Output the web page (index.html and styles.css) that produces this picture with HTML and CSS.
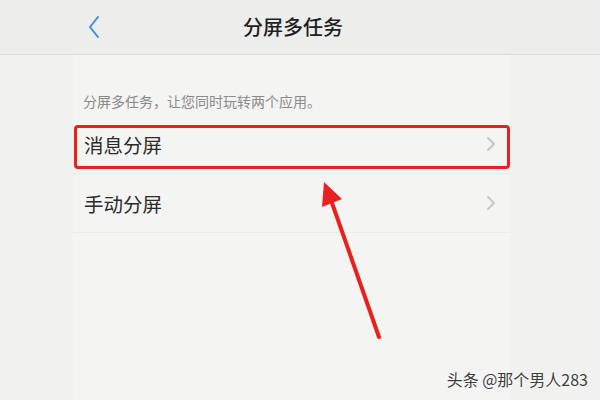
FILE: index.html
```html
<!DOCTYPE html>
<html lang="zh-CN">
<head>
    <meta charset="UTF-8">
    <meta name="viewport" content="width=device-width, initial-scale=1.0">
    <title>分屏多任务</title>
    <link rel="stylesheet" href="styles.css">
</head>
<body>
    <div class="header">
        <svg class="back" width="14" height="24" viewBox="0 0 14 24">
            <path d="M11 2 L3 12 L11 22" fill="none" stroke="#3d8fe0" stroke-width="2" stroke-linecap="round" stroke-linejoin="round"/>
        </svg>
        <h1 class="title">分屏多任务</h1>
    </div>

    <div class="content">
        <p class="desc">分屏多任务，让您同时玩转两个应用。</p>
        <div class="row">
            <span class="label">消息分屏</span>
            <svg class="chevron" width="10" height="16" viewBox="0 0 10 16">
                <path d="M2 2 L8 8 L2 14" fill="none" stroke="#c6c6c6" stroke-width="1.8" stroke-linecap="round" stroke-linejoin="round"/>
            </svg>
            <div class="highlight"></div>
        </div>
        <div class="row">
            <span class="label">手动分屏</span>
            <svg class="chevron" width="10" height="16" viewBox="0 0 10 16">
                <path d="M2 2 L8 8 L2 14" fill="none" stroke="#c6c6c6" stroke-width="1.8" stroke-linecap="round" stroke-linejoin="round"/>
            </svg>
        </div>
    </div>

    <!-- annotation arrow -->
    <svg class="arrow" width="600" height="400" viewBox="0 0 600 400">
        <line x1="379" y1="337" x2="331" y2="200" stroke="#e8211f" stroke-width="4" stroke-linecap="round"/>
        <polygon points="324,182 322,207 342,199" fill="#e8211f"/>
    </svg>

    <div class="watermark">头条 @那个男人283</div>
</body>
</html>
```

FILE: styles.css
```css
body {
    margin: 0;
    width: 600px;
    height: 400px;
    overflow: hidden;
    background-color: #f1f1f0;
    font-family: "Noto Sans CJK SC", "Noto Sans", sans-serif;
    position: relative;
}
.header {
    height: 54px;
    border-bottom: 1px solid #dadada;
    background-color: #ededec;
    display: flex;
    align-items: center;
    justify-content: center;
    position: relative;
}
.back {
    position: absolute;
    left: 87px;
    top: 15px;
}
.title {
    margin: 0 0 0 -14px;
    font-size: 20px;
    font-weight: 500;
    color: #1e1e1e;
    line-height: 28px;
}
.content {
    margin-left: 73px;
    width: 437px;
    background-color: #f4f4f3;
    min-height: 345px;
}
.desc {
    margin: 0;
    padding: 36px 0 0 10px;
    height: 24px;
    font-size: 14px;
    line-height: 20px;
    color: #8a8a8a;
}
.row {
    height: 58px;
    display: flex;
    align-items: center;
    justify-content: space-between;
    padding: 0 14px 0 11px;
    border-bottom: 1px solid #ebebea;
    position: relative;
}
.label {
    font-size: 19.5px;
    color: #2a2a2a;
}
.highlight {
    position: absolute;
    left: 1px;
    right: 0;
    top: 10px;
    height: 38px;
    border: 3px solid #e8211f;
    border-radius: 4px;
}
.arrow {
    position: absolute;
    left: 0;
    top: 0;
}
.watermark {
    position: absolute;
    right: 12px;
    bottom: 9px;
    font-size: 16px;
    color: #3c3c3c;
    text-shadow: 0 0 2px #ffffff, 0 0 1px #ffffff;
}
```
